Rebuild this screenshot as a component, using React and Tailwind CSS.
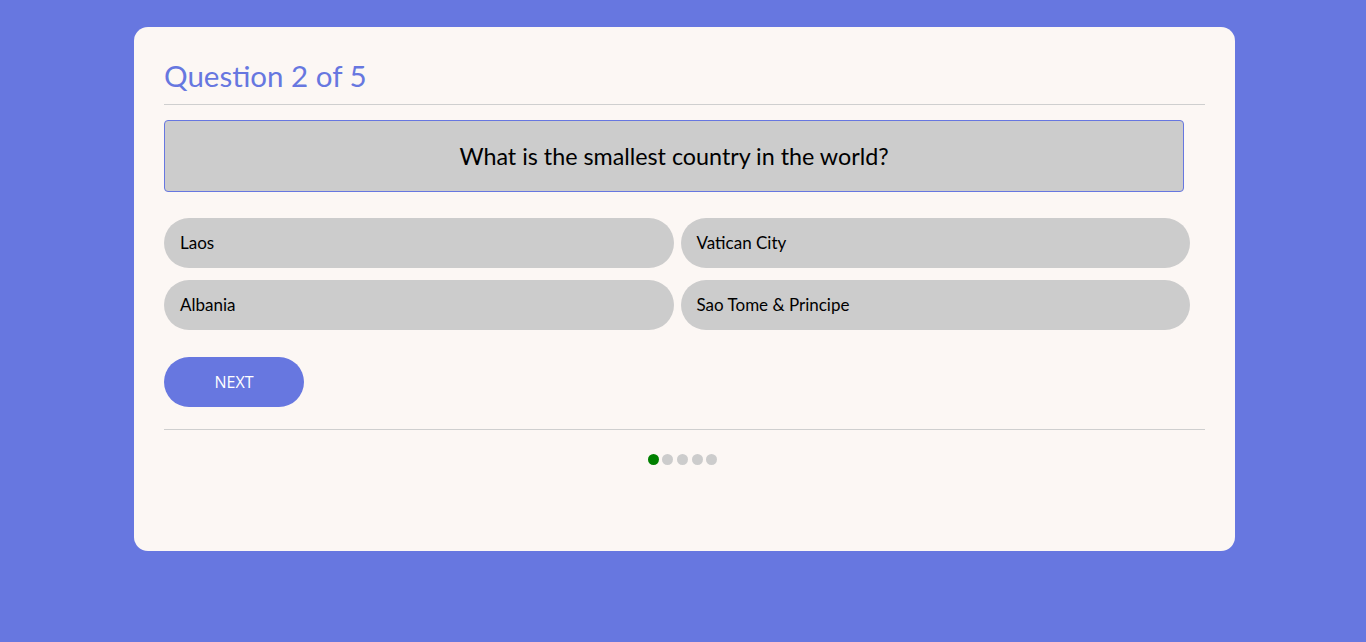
import React from "react";

const options = ["Laos", "Vatican City", "Albania", "Sao Tome & Principe"];

const App = () => {
  const current = 0;
  return (
    <div className="min-h-screen bg-[#6777e0] pt-[27px] font-['Lato',sans-serif]">
      <div className="mx-[134px] w-[1101px] h-[524px] rounded-[14px] bg-[#fcf7f4] px-[30px] pt-[29px]">
        {/* Header */}
        <h1 className="text-[29.5px] leading-[40px] text-[#6777e0] pb-[8px] border-b border-[#cfcfcf]">
          Question 2 of 5
        </h1>

        {/* Question box */}
        <div className="mt-[15px] w-[1020px] h-[72px] flex items-center justify-center rounded-[4px] border border-[#6777e0] bg-[#cccccc] text-[23.3px] text-black">
          What is the smallest country in the world?
        </div>

        {/* Options */}
        <div className="mt-[26px] w-[1026px] grid grid-cols-2 gap-x-[7px] gap-y-[12px]">
          {options.map((o) => (
            <button
              key={o}
              className="h-[50px] rounded-full bg-[#cccccc] text-left pl-[16px] text-[17px] text-black"
            >
              {o}
            </button>
          ))}
        </div>

        <button className="mt-[27px] w-[140px] h-[50px] rounded-full bg-[#6777e0] text-white text-[16px] font-['Open_Sans',sans-serif]">
          NEXT
        </button>

        <div className="mt-[22px] border-t border-[#cfcfcf]" />

        {/* Progress dots */}
        <div className="mt-[24px] flex justify-center gap-[3.7px] pr-[4px]">
          {[0, 1, 2, 3, 4].map((i) => (
            <span
              key={i}
              className={
                i === current
                  ? "w-[11px] h-[11px] rounded-full bg-[#008000]"
                  : "w-[11px] h-[11px] rounded-full bg-[#cccccc]"
              }
            />
          ))}
        </div>
      </div>
    </div>
  );
};

export default App;
